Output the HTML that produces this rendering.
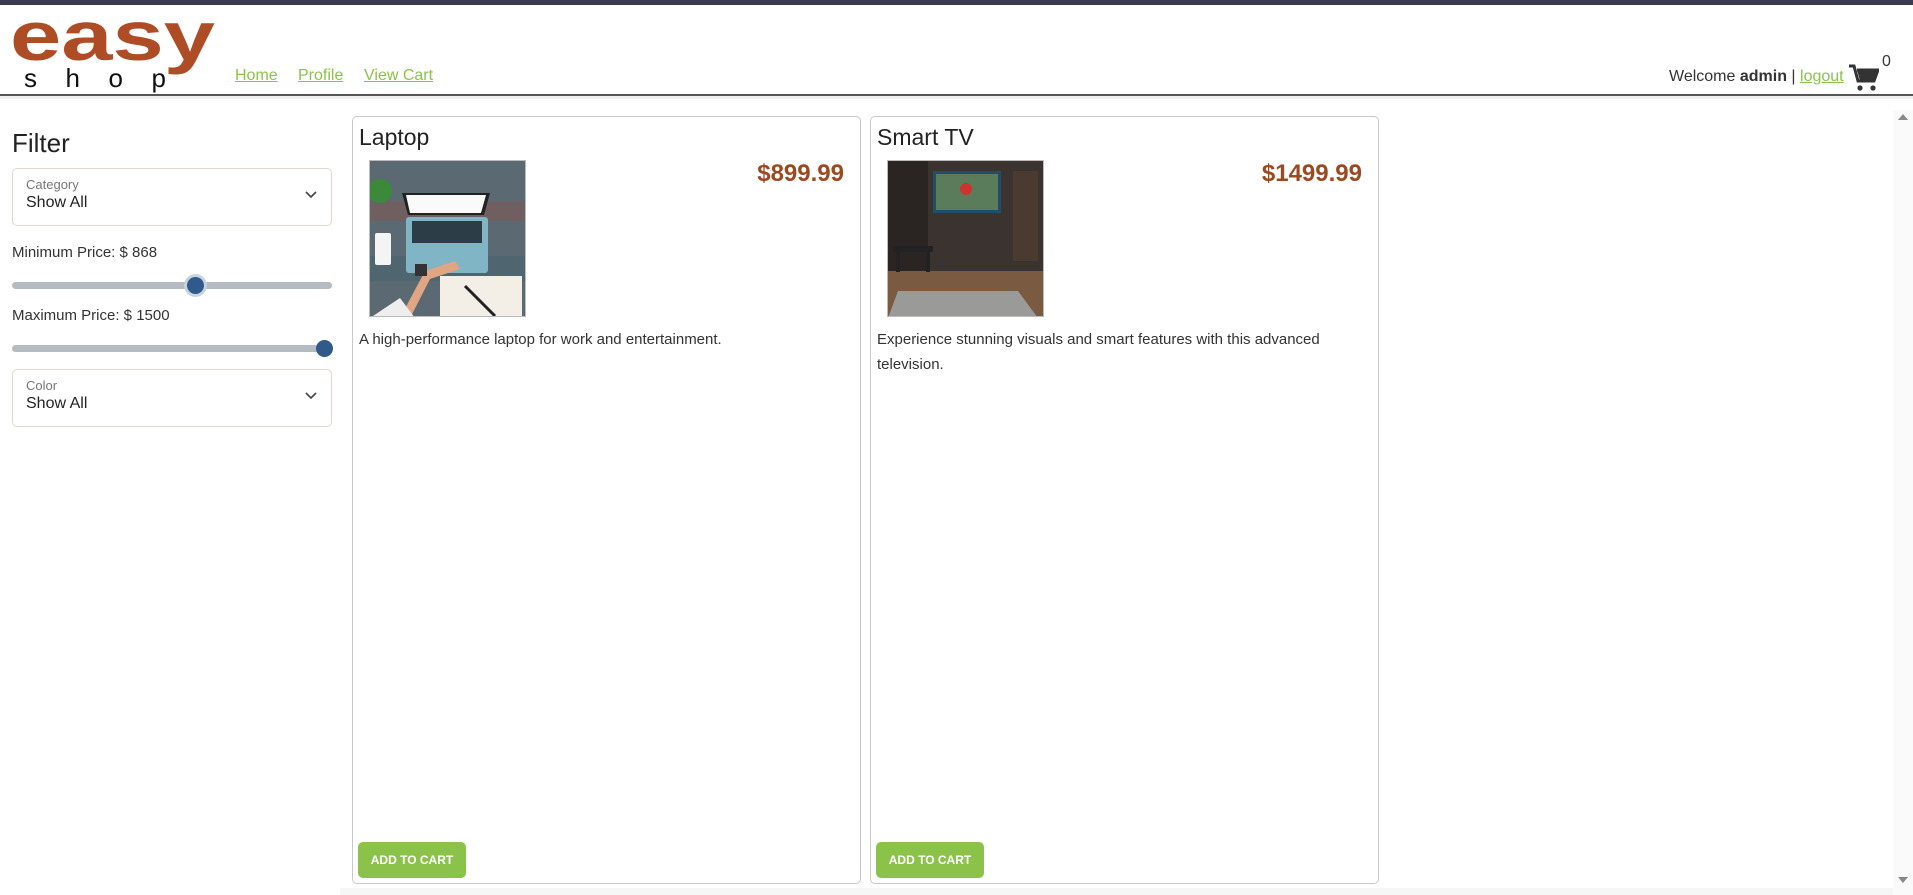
<!DOCTYPE html>
<html><head><meta charset="utf-8">
<style>
*{box-sizing:border-box;margin:0;padding:0}
body{width:1913px;height:895px;overflow:hidden;background:#fff;font-family:"Liberation Sans",sans-serif;color:#333;position:relative}
.abs{position:absolute}
.topbar{left:0;top:0;width:1913px;height:5px;background:#3b3a4e}
.hline{left:0;top:94px;width:1913px;height:2px;background:#555}
.hshadow{left:0;top:96px;width:1913px;height:3px;background:#eee}
.nav a{position:absolute;top:67px;font-size:16px;color:#8bc34a;text-decoration:underline}
.sel{left:12px;width:320px;height:58px;border:1px solid #e0d8cc;border-radius:5px}
.sel .l{position:absolute;left:13px;top:8px;font-size:13px;color:#777}
.sel .v{position:absolute;left:13px;top:25px;font-size:16px;color:#222}
.sel svg{position:absolute;right:14px;top:22px}
.track{left:12px;width:320px;height:7px;border-radius:4px;background:#b5bcc1}
.thumb{width:17px;height:17px;border-radius:50%;background:#2f5a8a}
.card{top:116px;width:509px;height:768px;border:1px solid #c8c8c8;border-radius:5px}
.card h2{position:absolute;left:6px;top:7px;font-size:23px;font-weight:normal;color:#222}
.card .img{position:absolute;left:16px;top:43px;width:157px;height:157px;border:1px solid #bbb;overflow:hidden}
.card .price{position:absolute;right:16px;top:43px;font-size:24px;font-weight:bold;color:#9a4a22}
.card .desc{position:absolute;left:6px;top:210px;width:490px;font-size:15px;line-height:25px;color:#333}
.card .btn{position:absolute;left:5px;bottom:5px;width:108px;height:36px;background:#8bc34a;border-radius:5px;color:#fff;font-size:12px;font-weight:bold;text-align:center;line-height:36px}
</style></head><body>
<div class="abs topbar"></div>
<svg class="abs" style="left:0;top:0" width="230" height="95" viewBox="0 0 230 95">
<text x="10" y="60" font-family="Liberation Sans, sans-serif" font-size="70" font-weight="bold" fill="#ae4c26" textLength="205" lengthAdjust="spacingAndGlyphs">easy</text>
<text x="24" y="87" font-family="Liberation Sans, sans-serif" font-size="26" fill="#111" textLength="142" lengthAdjust="spacing">shop</text>
</svg>
<div class="nav"><a style="left:235px">Home</a><a style="left:298px">Profile</a><a style="left:364px">View Cart</a></div>
<div class="abs" style="left:1669px;top:68px;font-size:16px">Welcome <b>admin</b> | <span style="color:#8bc34a;text-decoration:underline">logout</span></div>
<svg class="abs" style="left:1849px;top:64px" width="30" height="28" viewBox="0 0 30 28"><path d="M0 2h5l4 15h16l4-11H8" fill="none" stroke="#333" stroke-width="3"/><path d="M8 6h21l-4 11H11z" fill="#333"/><circle cx="11" cy="24" r="2.6" fill="#333"/><circle cx="24" cy="24" r="2.6" fill="#333"/></svg>
<div class="abs" style="left:1882px;top:53px;font-size:16px">0</div>
<div class="abs hline"></div><div class="abs hshadow"></div>

<div class="abs" style="left:12px;top:128px;font-size:26px;color:#222">Filter</div>
<div class="abs sel" style="top:168px"><div class="l">Category</div><div class="v">Show All</div><svg width="12" height="8" viewBox="0 0 12 8"><path d="M1 1l5 5 5-5" fill="none" stroke="#444" stroke-width="1.6"/></svg></div>
<div class="abs" style="left:12px;top:244px;font-size:15px">Minimum Price: $ 868</div>
<div class="abs track" style="top:282px"></div>
<div class="abs thumb" style="left:187px;top:277px;box-shadow:0 0 0 3px #c7d3e0"></div>
<div class="abs" style="left:12px;top:307px;font-size:15px">Maximum Price: $ 1500</div>
<div class="abs track" style="top:345px"></div>
<div class="abs thumb" style="left:316px;top:340px"></div>
<div class="abs sel" style="top:369px"><div class="l">Color</div><div class="v">Show All</div><svg width="12" height="8" viewBox="0 0 12 8"><path d="M1 1l5 5 5-5" fill="none" stroke="#444" stroke-width="1.6"/></svg></div>

<div class="abs card" style="left:352px">
<h2>Laptop</h2>
<div class="img"><svg width="157" height="157" viewBox="0 0 157 157">
<rect width="157" height="157" fill="#5b6a72"/><rect y="40" width="157" height="20" fill="#6f5f60"/><rect y="95" width="157" height="25" fill="#4f6570"/>
<circle cx="10" cy="30" r="12" fill="#3a8a3a"/>
<path d="M32 32h88l-6 22H38z" fill="#222"/><path d="M36 34h80l-5 18H40z" fill="#fafafa"/>
<rect x="36" y="56" width="82" height="56" rx="3" fill="#7fb5c4"/><rect x="42" y="60" width="70" height="22" fill="#2d3d48"/>
<rect x="5" y="72" width="16" height="32" rx="2" fill="#f4f4f4"/>
<path d="M30 157L55 110l30-10 5 8-30 10-25 49z" fill="#e0a582"/><rect x="45" y="103" width="12" height="12" fill="#333"/>
<rect x="70" y="115" width="82" height="42" fill="#f3eee6"/><path d="M95 125l30 30" stroke="#222" stroke-width="3"/><path d="M0 157l30-20 15 20z" fill="#eee"/>
</svg></div>
<div class="price">$899.99</div>
<div class="desc">A high-performance laptop for work and entertainment.</div>
<div class="btn">ADD TO CART</div>
</div>

<div class="abs card" style="left:870px">
<h2>Smart TV</h2>
<div class="img"><svg width="157" height="157" viewBox="0 0 157 157">
<rect width="157" height="157" fill="#2a2522"/><rect x="40" y="0" width="117" height="110" fill="#3a3330"/>
<rect x="45" y="10" width="68" height="42" fill="#1f4e6a"/><rect x="48" y="13" width="62" height="36" fill="#5b7c5a"/><circle cx="78" cy="28" r="6" fill="#c33"/>
<rect x="125" y="10" width="25" height="90" fill="#4a3a30"/>
<path d="M0 110h157v47H0z" fill="#7a5a40"/><path d="M10 130h120l20 27H0z" fill="#9a9a98"/>
<rect x="5" y="85" width="40" height="6" fill="#222"/><rect x="8" y="91" width="4" height="20" fill="#222"/><rect x="38" y="91" width="4" height="20" fill="#222"/>
</svg></div>
<div class="price">$1499.99</div>
<div class="desc">Experience stunning visuals and smart features with this advanced television.</div>
<div class="btn">ADD TO CART</div>
</div>

<div class="abs" style="left:1893px;top:110px;width:20px;height:785px;background:#fafafa"></div>
<div class="abs" style="left:1898px;top:114px;width:0;height:0;border-left:5px solid transparent;border-right:5px solid transparent;border-bottom:6px solid #888"></div>
<div class="abs" style="left:1898px;top:877px;width:0;height:0;border-left:5px solid transparent;border-right:5px solid transparent;border-top:6px solid #888"></div>
<div class="abs" style="left:340px;top:888px;width:1553px;height:7px;background:#f6f6f6"></div>
</body></html>
